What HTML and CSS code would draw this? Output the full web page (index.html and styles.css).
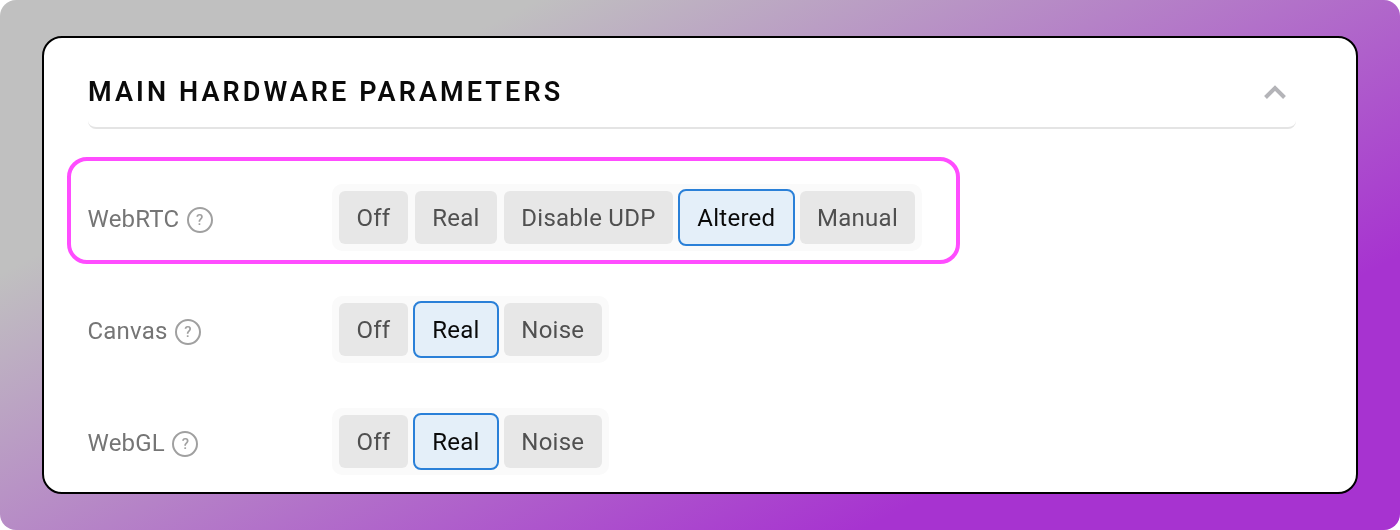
FILE: index.html
```html
<!DOCTYPE html>
<html lang="en">
<head>
<meta charset="utf-8">
<title>Main hardware parameters</title>
<link rel="stylesheet" href="styles.css">
</head>
<body>
<main class="stage">
  <section class="card">
    <header class="card-header">
      <h2 class="card-title">MAIN HARDWARE PARAMETERS</h2>
      <svg class="chevron" viewBox="0 0 22 14" width="22" height="14" aria-hidden="true"><path d="M1.500 12.500 L11 3 L20.500 12.500" fill="none" stroke="#b4b4b8" stroke-width="4"/></svg>
    </header>
    <div class="rows">
      <div class="row">
        <div class="label"><span class="name">WebRTC</span><span class="help">?</span></div>
        <div class="group">
          <button class="opt">Off</button><button class="opt">Real</button><button class="opt">Disable UDP</button><button class="opt active">Altered</button><button class="opt">Manual</button>
        </div>
      </div>
      <div class="row">
        <div class="label"><span class="name">Canvas</span><span class="help">?</span></div>
        <div class="group">
          <button class="opt">Off</button><button class="opt active">Real</button><button class="opt">Noise</button>
        </div>
      </div>
      <div class="row">
        <div class="label"><span class="name">WebGL</span><span class="help">?</span></div>
        <div class="group">
          <button class="opt">Off</button><button class="opt active">Real</button><button class="opt">Noise</button>
        </div>
      </div>
    </div>
    <div class="highlight"></div>
  </section>
</main>
</body>
</html>
```
FILE: styles.css
```css
* { box-sizing: border-box; }
html, body { margin: 0; background: #fff; }
.stage {
  width: 1400px;
  height: 530px;
  padding: 36px 42px;
  border-radius: 16px;
  background: linear-gradient(153deg, #c0c0c0 22%, #a733d0 78%);
  overflow: hidden;
}
.card {
  position: relative;
  height: 458px;
  padding: 0 60px 0 44px;
  background: #fff;
  border: 2px solid #000;
  border-radius: 20px;
  overflow: hidden;
  will-change: transform;
  font-family: Roboto, "Liberation Sans", sans-serif;
}
.card-header {
  display: flex;
  justify-content: space-between;
  align-items: center;
  height: 91px;
  padding: 19px 10px 0 0;
  border-bottom: 2px solid #e4e4e4;
  border-radius: 0 0 8px 8px;
}
.card-title {
  margin: 0;
  font-size: 27px;
  font-weight: 600;
  letter-spacing: 3.100px;
  color: #0a0a0a;
}
.rows {
  display: flex;
  flex-direction: column;
  gap: 45px;
  padding-top: 55px;
}
.row {
  display: flex;
  align-items: center;
}
.label {
  display: flex;
  align-items: center;
  gap: 7.500px;
  width: 244px;
  padding-top: 5px;
  font-size: 24px;
  letter-spacing: 0.2px;
  color: #757575;
}
.name {
  margin: -2px 0 0 -0.500px;
}
.help {
  display: flex;
  align-items: center;
  justify-content: center;
  width: 26px;
  height: 26px;
  border: 2px solid #a0a0a0;
  border-radius: 50%;
  font-size: 15px;
  font-weight: 500;
  color: #a0a0a0;
}
.group {
  display: flex;
  gap: 3px;
  padding: 5px;
  background: #fafafa;
  border-radius: 10px;
}
.opt {
  height: 57px;
  padding: 1px 17.400px 0;
  border: 2px solid transparent;
  border-radius: 8px;
  background: #e7e7e7;
  background-clip: padding-box;
  font: 400 24px Roboto, "Liberation Sans", sans-serif;
  letter-spacing: 0.25px;
  color: #505050;
}
.opt.active {
  background: #e4eff9;
  border-color: #2a80d8;
  color: #0a0a0a;
}
.highlight {
  position: absolute;
  left: 23px;
  top: 119px;
  width: 893px;
  height: 107px;
  border: 4px solid #ff4dff;
  border-radius: 20px;
  pointer-events: none;
}
```
